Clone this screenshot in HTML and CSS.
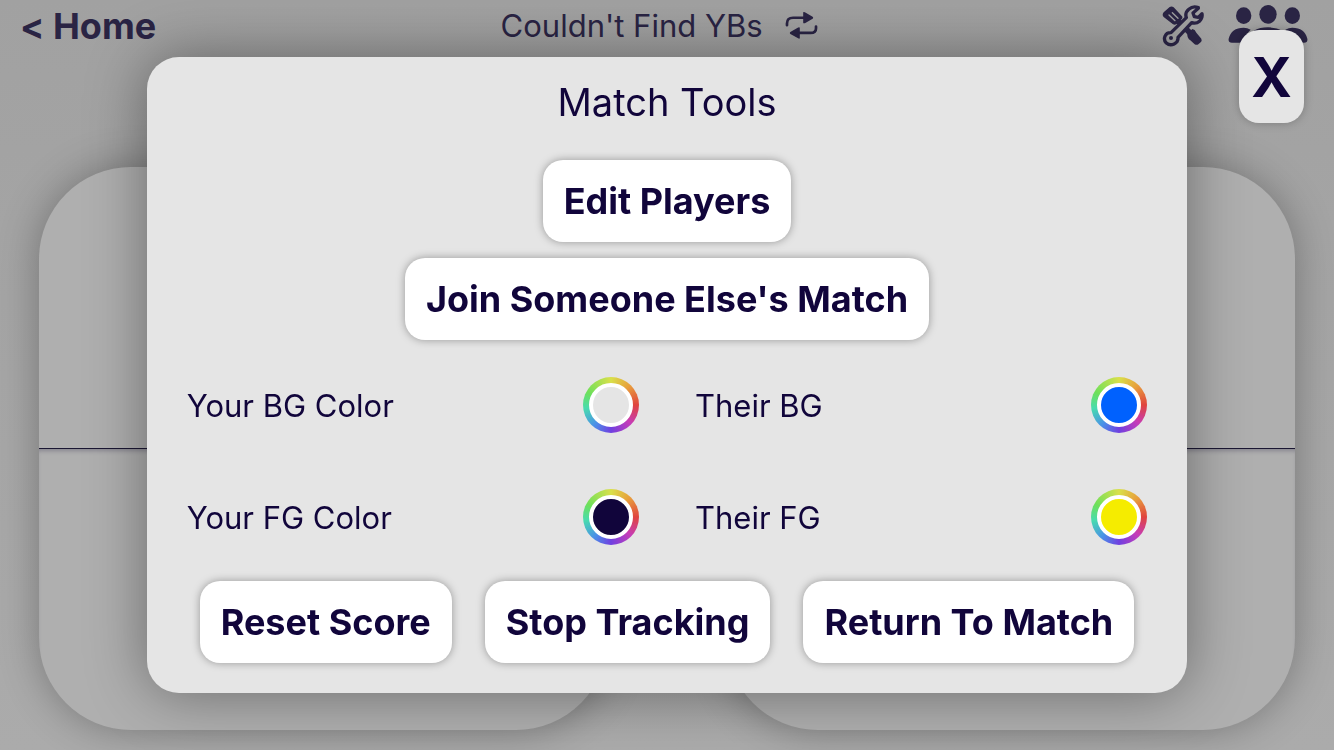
FILE: index.html
```html
<!DOCTYPE html>
<html lang="en">
<head>
    <meta charset="UTF-8">
    <meta name="viewport" content="width=device-width, initial-scale=1.0">
    <title>Match Tools</title>
    <link rel="stylesheet" href="styles.css">
</head>
<body>
    <div class="match">
        <header class="top-bar">
            <a href="#" class="home-link">&lt; Home</a>
            <button type="button" class="match-name">
                Couldn't Find YBs
                <svg class="swap-icon" viewBox="0 0 96 80" aria-hidden="true">
                    <path d="M5 39V34Q5 17 23 17H58M91 43V48Q91 62 75 62H40" fill="none" stroke="currentColor" stroke-width="8" stroke-linecap="round"/>
                    <path d="M53 3Q53 -2 58 1L81 14Q84 17 81 20L58 33Q53 35 53 31ZM43 48Q43 43 38 46L15 59Q12 62 15 65L38 78Q43 81 43 76Z" fill="currentColor"/>
                </svg>
            </button>
            <div class="top-icons">
                <button type="button" class="icon-btn" aria-label="Match tools">
                    <svg class="tools-icon" viewBox="0 0 126 126" aria-hidden="true">
                        <path d="M5 22L23 6Q29 2 35 7L60 34Q63 38 59 43L43 58Q37 61 32 57L5 36Q-1 29 5 22Z" fill="currentColor"/>
                        <path d="M46 46L88 88" stroke="currentColor" stroke-width="17"/>
                        <path d="M76 86L91 72Q99 73 103 83L118 101Q121 108 116 112L109 118Q104 121 98 118L85 106Q75 99 76 86Z" fill="currentColor"/>
                        <path d="M21 30L39 47M31 23L48 40" stroke="#a0a0a0" stroke-width="4" stroke-linecap="round"/>
                        <path d="M109 10L93 24L97 35L109 37L120 26C123 44 107 59 89 53L48 97C50 115 27 126 13 114C1 101 10 82 27 83L73 38C66 18 88 0 109 8Z" fill="#a0a0a0" stroke="currentColor" stroke-width="10" stroke-linejoin="round"/>
                        <circle cx="27" cy="99" r="6" fill="currentColor"/>
                    </svg>
                </button>
                <button type="button" class="icon-btn" aria-label="Players">
                    <svg class="people-icon" viewBox="0 0 240 126" fill="currentColor" aria-hidden="true">
                        <ellipse cx="47" cy="32" rx="23" ry="25"/>
                        <ellipse cx="120" cy="28" rx="26" ry="28"/>
                        <ellipse cx="193" cy="32" rx="23" ry="25"/>
                        <path d="M12 113Q0 113 2 101Q10 68 47 68Q58 68 68 74Q52 88 49 113ZM228 113Q240 113 238 101Q230 68 193 68Q182 68 172 74Q188 88 191 113ZM68 113Q58 113 60 102Q70 68 120 67Q170 68 180 102Q182 113 172 113Z"/>
                    </svg>
                </button>
            </div>
        </header>
        <main class="scores">
            <div class="score-card">
                <div class="score-half"></div>
                <div class="score-half lower"></div>
            </div>
            <div class="score-card">
                <div class="score-half"></div>
                <div class="score-half lower"></div>
            </div>
        </main>
    </div>

    <div class="overlay">
        <section class="panel" role="dialog" aria-labelledby="panelTitle">
            <h1 id="panelTitle">Match Tools</h1>
            <div class="stack">
                <button type="button" class="btn">Edit Players</button>
                <button type="button" class="btn">Join Someone Else's Match</button>
            </div>
            <div class="colors">
                <div class="color-row">
                    <label for="yourBg">Your BG Color</label>
                    <input type="color" id="yourBg" value="#e5e5e5">
                </div>
                <div class="color-row">
                    <label for="theirBg">Their BG</label>
                    <input type="color" id="theirBg" value="#0061fe">
                </div>
                <div class="color-row">
                    <label for="yourFg">Your FG Color</label>
                    <input type="color" id="yourFg" value="#11053b">
                </div>
                <div class="color-row">
                    <label for="theirFg">Their FG</label>
                    <input type="color" id="theirFg" value="#f5ec00">
                </div>
            </div>
            <div class="actions">
                <button type="button" class="btn">Reset Score</button>
                <button type="button" class="btn">Stop Tracking</button>
                <button type="button" class="btn">Return To Match</button>
            </div>
        </section>
        <button type="button" class="close-btn">X</button>
    </div>
</body>
</html>
```

FILE: styles.css
```css
* {
    box-sizing: border-box;
}

body {
    margin: 0;
    font-family: Inter, "Liberation Sans", sans-serif;
    color: #11053b;
    background: #a3a3a3;
}

button {
    font-family: inherit;
    color: inherit;
    border: none;
    cursor: pointer;
}

.match {
    display: flex;
    flex-direction: column;
    height: 100vh;
    color: #2a2444;
    background: linear-gradient(#a1a1a1, #ababab);
}

.top-bar {
    display: flex;
    align-items: center;
    justify-content: space-between;
    height: 51px;
    padding: 0 26px 0 20px;
}

.home-link {
    font-size: 36px;
    font-weight: 700;
    font-feature-settings: "calt" 0;
    color: inherit;
    text-decoration: none;
}

.match-name {
    display: flex;
    align-items: center;
    gap: 22px;
    padding: 0;
    font-size: 31px;
    background: none;
}

.swap-icon {
    width: 33px;
    height: 27px;
}

.top-icons {
    display: flex;
    justify-content: flex-end;
    gap: 24px;
}

.icon-btn {
    display: flex;
    align-items: center;
    padding: 0;
    background: none;
}

.tools-icon {
    width: 42px;
    height: 42px;
}

.people-icon {
    width: 80px;
    height: 42px;
}

.scores {
    flex: 1;
    display: grid;
    grid-template-columns: 1fr 1fr;
    gap: 118px;
    padding: 116px 39px 20px;
}

.score-card {
    display: flex;
    flex-direction: column;
    border-radius: 92px;
    background: #afafaf;
    box-shadow: 0 0 40px rgba(0, 0, 0, 0.3);
    overflow: hidden;
}

.score-half {
    flex: 1;
}

.score-half.lower {
    border-top: 1px solid #1b1733;
    box-shadow: inset 0 4px 4px -2px rgba(42, 36, 68, 0.3);
}

.overlay {
    position: fixed;
    inset: 0;
    display: flex;
    align-items: center;
    justify-content: center;
}

.panel {
    width: 78%;
    padding: 20px 40px 30px;
    border-radius: 32px;
    background: #e5e5e5;
    box-shadow: 0 0 60px rgba(0, 0, 0, 0.4);
}

h1 {
    margin: 0 0 33px;
    font-size: 38px;
    font-weight: 400;
    line-height: 50px;
    text-align: center;
}

.stack {
    display: flex;
    flex-direction: column;
    align-items: center;
    gap: 16px;
}

.btn {
    height: 82px;
    padding: 0 21px;
    font-size: 36px;
    font-weight: 700;
    white-space: nowrap;
    border-radius: 20px;
    background: white;
    box-shadow: 0 0 8px rgba(0, 0, 0, 0.35);
}

.colors {
    display: grid;
    grid-template-columns: 1fr 1fr;
    gap: 56px;
    margin: 37px 0 36px;
}

.color-row {
    display: flex;
    align-items: center;
    justify-content: space-between;
    font-size: 31px;
}

input[type="color"] {
    appearance: none;
    width: 56px;
    height: 56px;
    padding: 6px;
    border: none;
    border-radius: 50%;
    background: conic-gradient(from 0deg, #d9e04a, #e8a03c 12%, #e0443e 25%, #c63cb8 37%, #7040e0 50%, #4a90e8 61%, #48dcae 73%, #6ee05a 83%, #d9e04a);
    cursor: pointer;
}

input[type="color"]::-webkit-color-swatch-wrapper {
    padding: 0;
}

input[type="color"]::-webkit-color-swatch {
    border: 4px solid white;
    border-radius: 50%;
}

.actions {
    display: flex;
    justify-content: center;
    gap: 33px;
}

.close-btn {
    position: absolute;
    top: 30px;
    right: 30px;
    width: 65px;
    height: 93px;
    padding: 0;
    font-size: 55px;
    font-weight: 700;
    border-radius: 20px;
    background: #e5e5e5;
    box-shadow: 0 0 10px rgba(0, 0, 0, 0.25);
}
```
